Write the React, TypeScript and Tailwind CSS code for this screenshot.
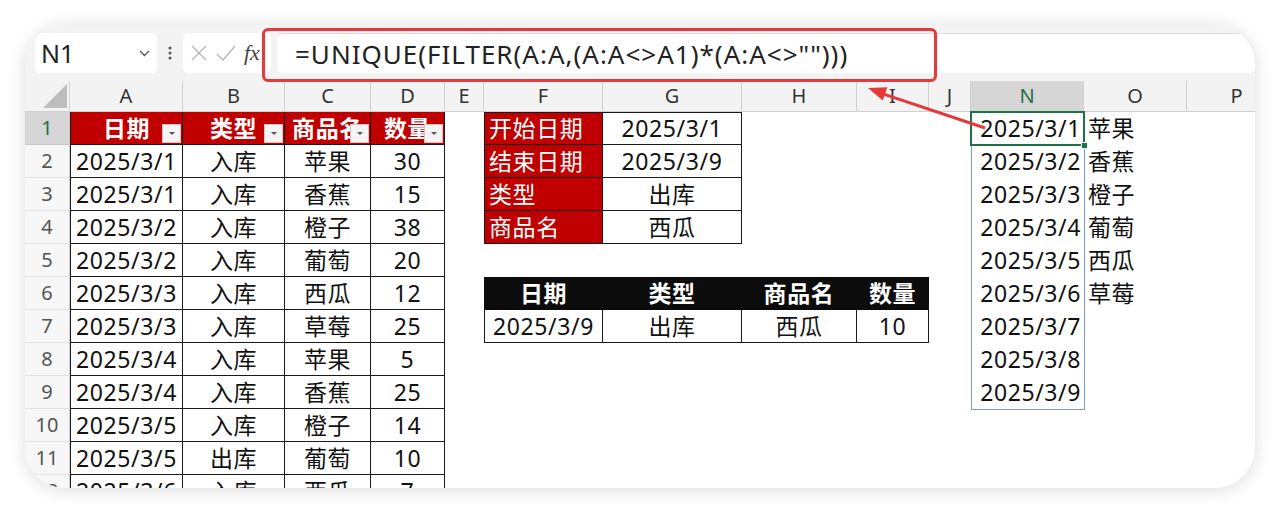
import React from "react";

const letters = ["", "A", "B", "C", "D", "E", "F", "G", "H", "I", "J", "N", "O", "P"];

const leftHeader = ["日期", "类型", "商品名", "数量"];
const leftRows = [
  ["2025/3/1", "入库", "苹果", "30"],
  ["2025/3/1", "入库", "香蕉", "15"],
  ["2025/3/2", "入库", "橙子", "38"],
  ["2025/3/2", "入库", "葡萄", "20"],
  ["2025/3/3", "入库", "西瓜", "12"],
  ["2025/3/3", "入库", "草莓", "25"],
  ["2025/3/4", "入库", "苹果", "5"],
  ["2025/3/4", "入库", "香蕉", "25"],
  ["2025/3/5", "入库", "橙子", "14"],
  ["2025/3/5", "出库", "葡萄", "10"],
  ["2025/3/6", "入库", "西瓜", "7"],
];
const criteria = [
  ["开始日期", "2025/3/1"],
  ["结束日期", "2025/3/9"],
  ["类型", "出库"],
  ["商品名", "西瓜"],
];
const resultHeader = ["日期", "类型", "商品名", "数量"];
const resultRow = ["2025/3/9", "出库", "西瓜", "10"];
const nCol = ["2025/3/1", "2025/3/2", "2025/3/3", "2025/3/4", "2025/3/5", "2025/3/6", "2025/3/7", "2025/3/8", "2025/3/9"];
const oCol = ["苹果", "香蕉", "橙子", "葡萄", "西瓜", "草莓"];

function FilterButton() {
  return (
    <div className="absolute right-[1px] bottom-[1px] w-[19px] h-[19px] bg-[#f4f4f4] border border-[#c8c8c8] flex items-center justify-center">
      <svg width="8" height="5" viewBox="0 0 8 5">
        <polygon points="1,1 7,1 4,4" fill="#555" />
      </svg>
    </div>
  );
}

function cellContent(r: number, c: number): { cls: string; text?: string; extra?: React.ReactNode } {
  if (r === 0) {
    if (c === 0) {
      return {
        cls: "bg-[#f3f3f3] border-r border-b border-[#d0d0d0]",
        extra: (
          <svg className="absolute right-[2px] bottom-[3px]" width="24" height="24" viewBox="0 0 24 24">
            <polygon points="24,0 24,24 0,24" fill="#bdbdbd" />
          </svg>
        ),
      };
    }
    const sel = c === 11;
    return {
      cls:
        "justify-center text-[20px] tracking-normal border-r border-b border-[#d0d0d0] " +
        (sel ? "bg-[#d6d6d6] text-[#2a6e48]" : "bg-[#f3f3f3] text-[#333]"),
      text: letters[c],
    };
  }
  if (c === 0) {
    const sel = r === 1;
    return {
      cls:
        "justify-center text-[20px] tracking-normal border-r border-[#d0d0d0] border-b " +
        (sel ? "bg-[#d6d6d6] text-[#2a6e48] border-b-[#c8c8c8]" : "bg-[#f7f7f7] text-[#555] border-b-[#e2e2e2]"),
      text: String(r),
    };
  }
  // left table A-D
  if (c >= 1 && c <= 4) {
    const lb = c === 1 ? " border-l" : "";
    if (r === 1) {
      return {
        cls: "justify-center bg-[#c00000] text-white font-bold border-r border-b border-[#1a1a1a]" + lb,
        text: leftHeader[c - 1],
        extra: <FilterButton />,
      };
    }
    const row = leftRows[r - 2];
    return {
      cls: "justify-center border-r border-b border-[#1a1a1a]" + lb,
      text: row ? row[c - 1] : "",
    };
  }
  // criteria F-G rows 1-4
  if (r >= 1 && r <= 4 && (c === 6 || c === 7)) {
    const tb = r === 1 ? " border-t" : "";
    if (c === 6) {
      return {
        cls: "justify-start pl-[4px] bg-[#c00000] text-white border-l border-r border-b border-[#1a1a1a]" + tb,
        text: criteria[r - 1][0],
      };
    }
    return {
      cls: "justify-center border-r border-b border-[#1a1a1a]" + tb,
      text: criteria[r - 1][1],
    };
  }
  // result table F-I rows 6-7
  if ((r === 6 || r === 7) && c >= 6 && c <= 9) {
    const lb = c === 6 ? " border-l" : "";
    if (r === 6) {
      return {
        cls: "justify-center bg-[#0c0c0c] text-white font-bold border-t border-r border-b border-[#0c0c0c]" + lb,
        text: resultHeader[c - 6],
      };
    }
    return {
      cls: "justify-center border-r border-b border-[#1a1a1a]" + lb,
      text: resultRow[c - 6],
    };
  }
  if (c === 11 && r >= 1 && r <= 9) {
    return { cls: "justify-end pr-[3px]", text: nCol[r - 1] };
  }
  if (c === 12 && r >= 1 && r <= 6) {
    return { cls: "justify-start pl-[4px]", text: oCol[r - 1] };
  }
  return { cls: "" };
}

function Sheet() {
  const cells: React.ReactNode[] = [];
  for (let r = 0; r <= 12; r++) {
    for (let c = 0; c <= 13; c++) {
      const { cls, text, extra } = cellContent(r, c);
      cells.push(
        <div key={r + "-" + c} className={"relative flex items-center whitespace-nowrap leading-none " + cls}>
          {text}
          {extra}
        </div>
      );
    }
  }
  return (
    <div className="relative">
      <div className="grid grid-cols-[45px_113px_102px_86px_74px_39px_119px_139px_115px_72px_42px_113px_103px_100px] grid-rows-[31px_repeat(12,33px)] text-[23px] tracking-[0.6px] text-[#111]">
        {cells}
      </div>
      {/* spill range border N1:N9 */}
      <div className="absolute left-[946px] top-[31px] w-[114px] h-[298px] border border-[#7f9cc6] pointer-events-none" />
      {/* active cell N1 */}
      <div className="absolute left-[945px] top-[30px] w-[115px] h-[35px] border-2 border-[#1f7246] pointer-events-none" />
      <div className="absolute left-[1056px] top-[61px] w-[7px] h-[7px] bg-[#1f7246] border border-white pointer-events-none" />
    </div>
  );
}

function Toolbar() {
  return (
    <div className="h-[56px] bg-[#f3f3f3] flex items-center pl-[10px]">
      <div className="w-[122px] h-[40px] bg-white rounded-[5px] flex items-center justify-between pl-[6px] pr-[7px]">
        <span className="text-[25px] text-[#222] leading-none">N1</span>
        <svg width="11" height="7" viewBox="0 0 11 7">
          <polyline points="1,1 5.5,5.5 10,1" fill="none" stroke="#555" strokeWidth="1.3" />
        </svg>
      </div>
      <div className="w-[26px] flex justify-center">
        <svg width="4" height="16" viewBox="0 0 4 16">
          <circle cx="2" cy="3" r="1.5" fill="#555" />
          <circle cx="2" cy="8" r="1.5" fill="#555" />
          <circle cx="2" cy="13" r="1.5" fill="#555" />
        </svg>
      </div>
      <div className="w-[88px] h-[40px] bg-white rounded-[5px] flex items-center pl-[7px] gap-[8px]">
        <svg width="18" height="18" viewBox="0 0 18 18">
          <line x1="2" y1="2" x2="16" y2="16" stroke="#b5b5b5" strokeWidth="1.3" />
          <line x1="16" y1="2" x2="2" y2="16" stroke="#b5b5b5" strokeWidth="1.3" />
        </svg>
        <svg width="20" height="18" viewBox="0 0 20 18">
          <polyline points="1,10 7,16 19,2" fill="none" stroke="#b5b5b5" strokeWidth="1.3" />
        </svg>
        <span className="font-['Liberation_Serif',serif] italic text-[22px] text-[#444] leading-none">fx</span>
      </div>
      <div className="flex-1 h-[40px] bg-white rounded-[5px] ml-[6px] flex items-center pl-[18px] border-t border-[#dedede]">
        <span className="text-[26px] tracking-[1px] text-[#222] leading-none whitespace-nowrap">=UNIQUE(FILTER(A:A,(A:A&lt;&gt;A1)*(A:A&lt;&gt;"")))</span>
      </div>
    </div>
  );
}

export default function App() {
  return (
    <div className="w-[1280px] h-[513px] bg-white pt-[25px] pl-[25px] font-['Noto_Sans','Noto_Sans_CJK_SC',sans-serif]">
      <div className="relative w-[1230px] h-[463px] bg-white rounded-[40px] overflow-hidden shadow-[0_2px_18px_rgba(0,0,0,0.14)]">
        <Toolbar />
        <Sheet />
        {/* red highlight box around formula */}
        <div className="absolute left-[237px] top-[3px] w-[675px] h-[54px] border-[3px] border-[#e5393a] rounded-[6px] pointer-events-none" />
        {/* red arrow */}
        <svg className="absolute left-0 top-0 pointer-events-none" width="1230" height="463" viewBox="0 0 1230 463">
          <line x1="960" y1="103" x2="858" y2="68.8" stroke="#e5393a" strokeWidth="3" />
          <polygon points="843,63 862.3,62.2 857.8,75.5" fill="#e5393a" />
        </svg>
      </div>
    </div>
  );
}
